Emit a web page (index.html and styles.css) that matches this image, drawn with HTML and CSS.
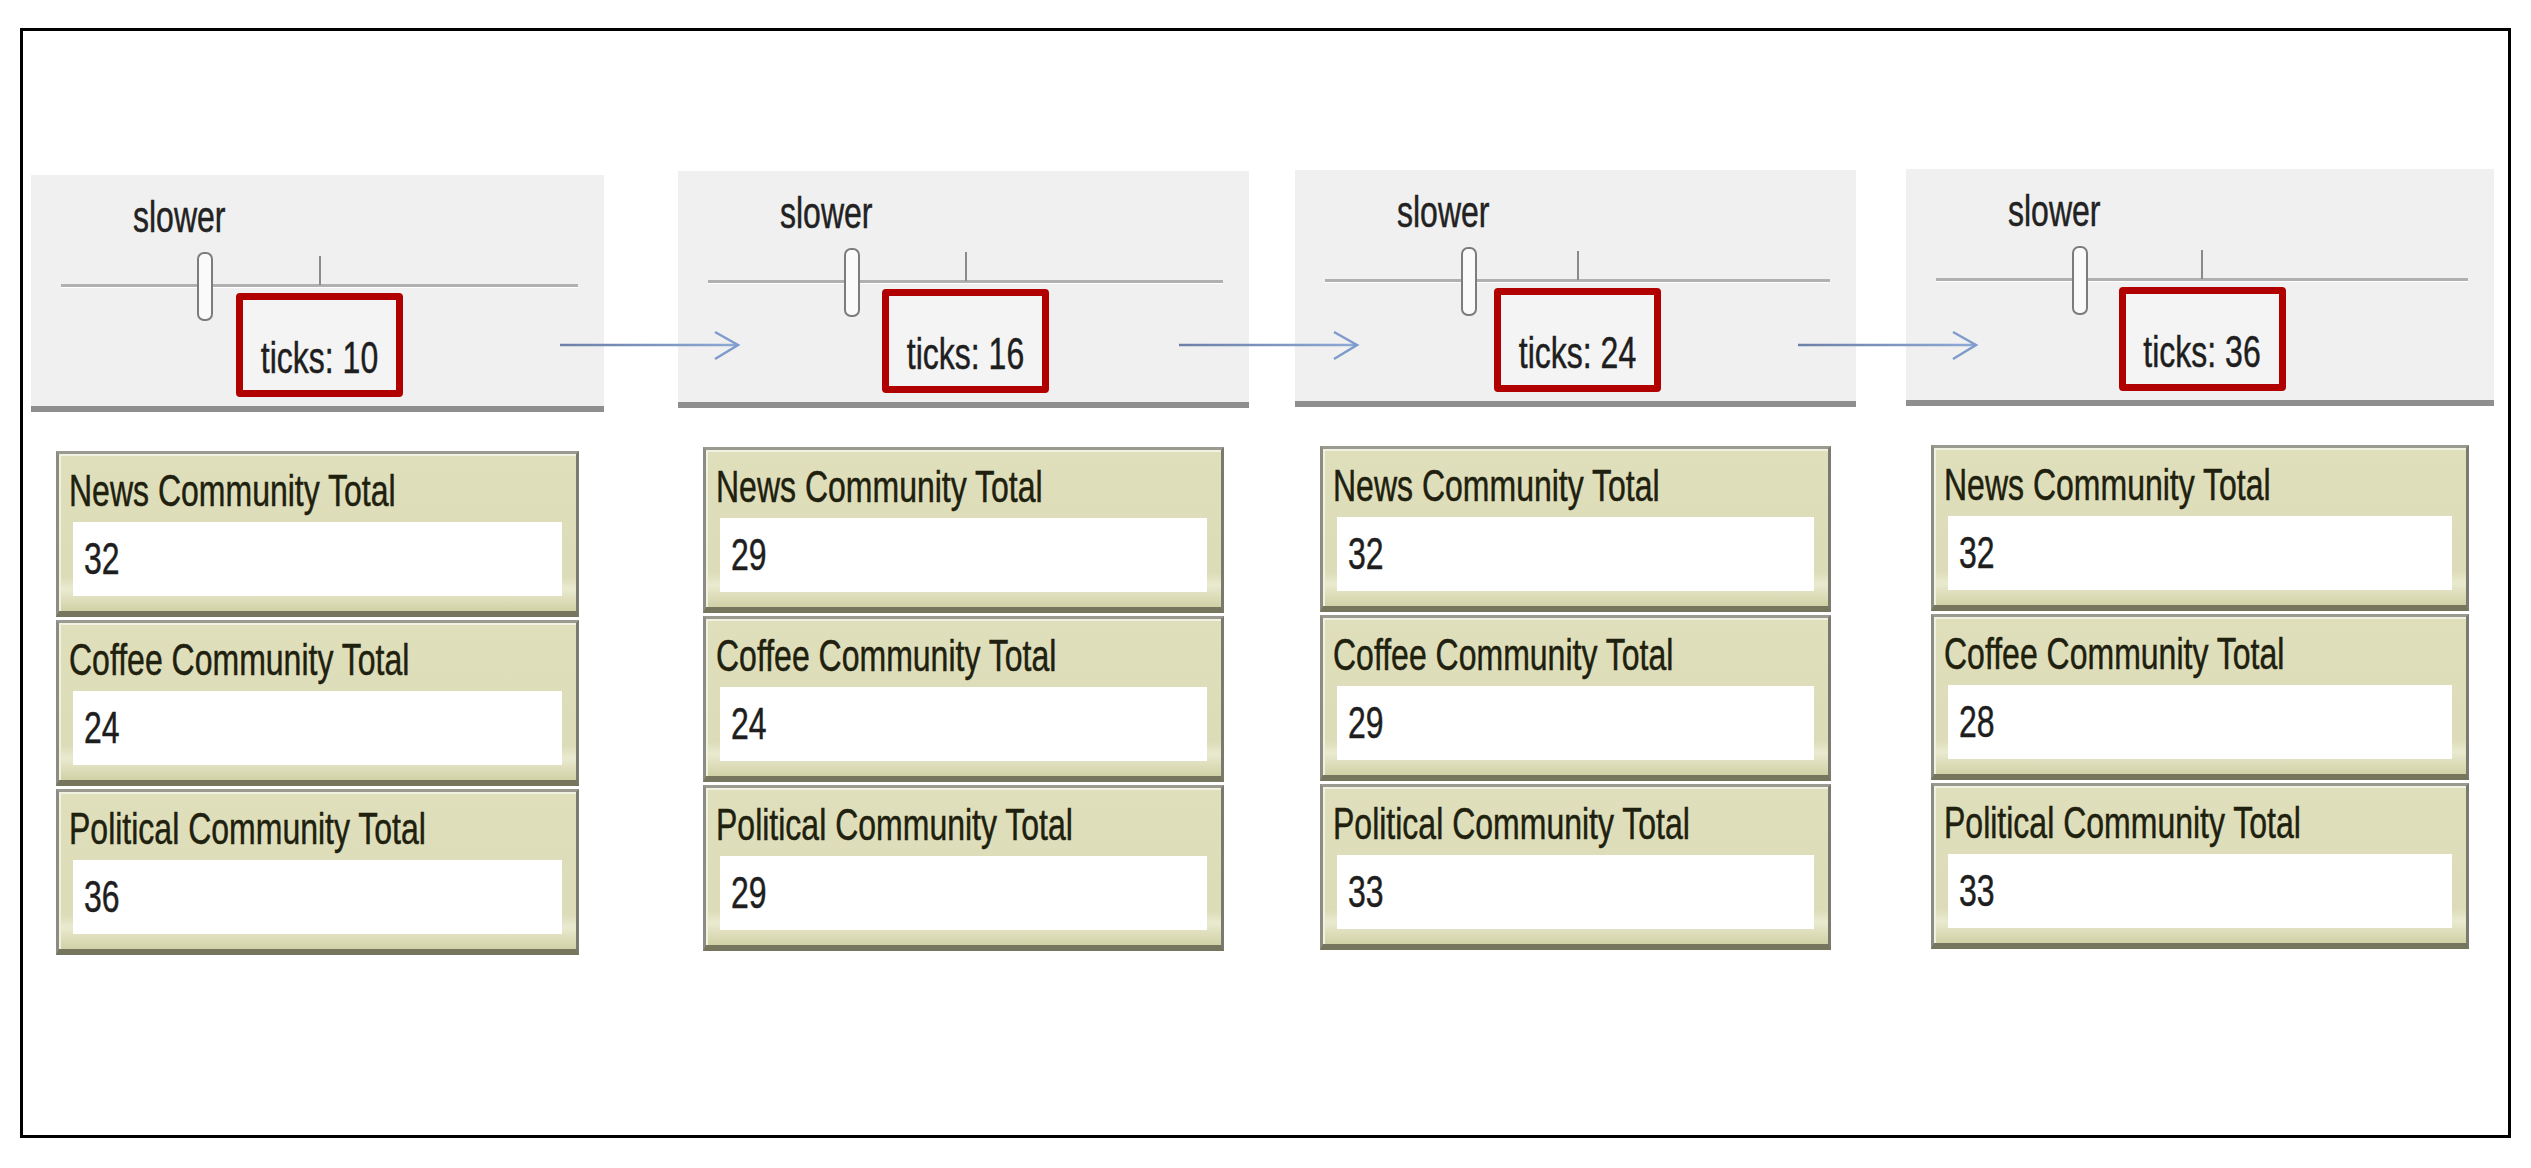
FILE: index.html
```html
<!DOCTYPE html>
<html lang="en">
<head>
<meta charset="utf-8">
<title>Speed slider and community totals</title>
<link rel="stylesheet" href="styles.css">
</head>
<body>
<div class="frame">
  <div class="row">
    <div class="col col-1">
      <div class="speed">
        <div class="speed-label"><span class="txt">slower</span></div>
        <div class="track"><span class="tick"></span><span class="thumb"></span></div>
        <div class="readout"><div class="ticks-box"><span class="txt">ticks: 10</span></div></div>
      </div>
      <div class="monitors">
        <div class="monitor"><div class="mon-label"><span class="txt">News Community Total</span></div><div class="mon-value"><span class="txt">32</span></div></div>
        <div class="monitor"><div class="mon-label"><span class="txt">Coffee Community Total</span></div><div class="mon-value"><span class="txt">24</span></div></div>
        <div class="monitor"><div class="mon-label"><span class="txt">Political Community Total</span></div><div class="mon-value"><span class="txt">36</span></div></div>
      </div>
    </div>

    <div class="col col-2">
      <div class="speed">
        <div class="speed-label"><span class="txt">slower</span></div>
        <div class="track"><span class="tick"></span><span class="thumb"></span></div>
        <div class="readout"><div class="ticks-box"><span class="txt">ticks: 16</span></div></div>
      </div>
      <div class="monitors">
        <div class="monitor"><div class="mon-label"><span class="txt">News Community Total</span></div><div class="mon-value"><span class="txt">29</span></div></div>
        <div class="monitor"><div class="mon-label"><span class="txt">Coffee Community Total</span></div><div class="mon-value"><span class="txt">24</span></div></div>
        <div class="monitor"><div class="mon-label"><span class="txt">Political Community Total</span></div><div class="mon-value"><span class="txt">29</span></div></div>
      </div>
    </div>

    <div class="col col-3">
      <div class="speed">
        <div class="speed-label"><span class="txt">slower</span></div>
        <div class="track"><span class="tick"></span><span class="thumb"></span></div>
        <div class="readout"><div class="ticks-box"><span class="txt">ticks: 24</span></div></div>
      </div>
      <div class="monitors">
        <div class="monitor"><div class="mon-label"><span class="txt">News Community Total</span></div><div class="mon-value"><span class="txt">32</span></div></div>
        <div class="monitor"><div class="mon-label"><span class="txt">Coffee Community Total</span></div><div class="mon-value"><span class="txt">29</span></div></div>
        <div class="monitor"><div class="mon-label"><span class="txt">Political Community Total</span></div><div class="mon-value"><span class="txt">33</span></div></div>
      </div>
    </div>

    <div class="col col-4">
      <div class="speed">
        <div class="speed-label"><span class="txt">slower</span></div>
        <div class="track"><span class="tick"></span><span class="thumb"></span></div>
        <div class="readout"><div class="ticks-box"><span class="txt">ticks: 36</span></div></div>
      </div>
      <div class="monitors">
        <div class="monitor"><div class="mon-label"><span class="txt">News Community Total</span></div><div class="mon-value"><span class="txt">32</span></div></div>
        <div class="monitor"><div class="mon-label"><span class="txt">Coffee Community Total</span></div><div class="mon-value"><span class="txt">28</span></div></div>
        <div class="monitor"><div class="mon-label"><span class="txt">Political Community Total</span></div><div class="mon-value"><span class="txt">33</span></div></div>
      </div>
    </div>

    <svg class="arrow arrow-1" width="184" height="34" viewBox="0 0 184 34">
      <defs>
        <linearGradient id="ag" gradientUnits="userSpaceOnUse" x1="0" y1="0" x2="184" y2="0">
          <stop offset="0" stop-color="#6c7fa6"/>
          <stop offset="1" stop-color="#8eaad8"/>
        </linearGradient>
      </defs>
      <line x1="2" y1="17" x2="180" y2="17" stroke="url(#ag)" stroke-width="2.5"/>
      <path d="M157 4 L180 17 L157 31" fill="none" stroke="#7f9bcc" stroke-width="2.5"/>
    </svg>
    <svg class="arrow arrow-2" width="184" height="34" viewBox="0 0 184 34">
      <line x1="2" y1="17" x2="180" y2="17" stroke="url(#ag)" stroke-width="2.5"/>
      <path d="M157 4 L180 17 L157 31" fill="none" stroke="#7f9bcc" stroke-width="2.5"/>
    </svg>
    <svg class="arrow arrow-3" width="184" height="34" viewBox="0 0 184 34">
      <line x1="2" y1="17" x2="180" y2="17" stroke="url(#ag)" stroke-width="2.5"/>
      <path d="M157 4 L180 17 L157 31" fill="none" stroke="#7f9bcc" stroke-width="2.5"/>
    </svg>
  </div>
</div>
</body>
</html>
```

FILE: styles.css
```css
* { box-sizing: border-box; }

html, body {
  margin: 0;
  padding: 0;
  background: #ffffff;
}

body {
  font-family: "Liberation Sans", Arial, sans-serif;
  font-size: 32px;
  color: #1c1c14;
}

.frame {
  width: 2491px;
  height: 1110px;
  margin: 28px 0 0 20px;
  border: 3px solid #000000;
  background: #ffffff;
}

.row {
  position: relative;
  display: flex;
  align-items: flex-start;
  padding-top: 140px;
}

.col { flex: none; }
.col-1 { width: 573px; margin-left: 8px; margin-top: 4px; }
.col-2 { width: 571px; margin-left: 74px; }
.col-3 { width: 561px; margin-left: 46px; margin-top: -1px; }
.col-4 { width: 588px; margin-left: 50px; margin-top: -2px; }

/* text rendering: tall, narrow UI font */
.txt {
  display: inline-block;
  line-height: 40px;
  white-space: nowrap;
  transform: scaleY(1.36);
  transform-origin: 0 31px;
  -webkit-text-stroke: 0.35px currentColor;
}

/* ---------- speed slider panel ---------- */
.speed {
  height: 237px;
  padding-top: 26px;
  background: #f0f0f0;
  border-bottom: 6px solid #8e8e8e;
}

.speed-label {
  height: 40px;
  line-height: 40px;
  margin-left: 102px;
  color: #222222;
}

.track {
  position: relative;
  height: 3px;
  margin: 43px 26px 0 30px;
  background: #b0b0b0;
  box-shadow: 0 1px 0 #ffffff;
}

.tick {
  position: absolute;
  left: 50%;
  bottom: 2px;
  width: 2px;
  height: 29px;
  margin-left: -1px;
  background: #8a8a8a;
}

.thumb {
  position: absolute;
  left: 136px;
  top: -32px;
  width: 16px;
  height: 69px;
  border: 2px solid #7c7c7c;
  border-radius: 7px;
  background: #fafafa;
}

.readout {
  margin: 6px 26px 0 30px;
  display: flex;
  justify-content: center;
}

.ticks-box {
  width: 167px;
  height: 104px;
  padding-top: 42px;
  border: 7px solid #b10000;
  border-radius: 4px;
  background: #f4f4f4;
  text-align: center;
  color: #1e1e1e;
}

/* ---------- monitors ---------- */
.monitors {
  margin: 39px 25px 0 25px;
  display: flex;
  flex-direction: column;
  gap: 3px;
}

.monitor {
  height: 166px;
  padding: 21px 14px 0 14px;
  border-style: solid;
  border-width: 3px 3px 6px 3px;
  border-color: #9a9a90 #7a7a6e #76765e #8c8c82;
  background: linear-gradient(to bottom, #dfdfbc 0%, #dcdcb8 78%, #eaead0 86%, #d1d1a6 100%);
  box-shadow: inset 2px 2px 0 #f1f1e2;
}

.mon-label {
  height: 40px;
  line-height: 40px;
  margin-left: -4px;
  color: #20200e;
}

.mon-value {
  height: 74px;
  margin-top: 7px;
  padding: 21px 0 0 11px;
  background: #ffffff;
  line-height: 40px;
  color: #1e1e1e;
}

/* ---------- arrows (overlay between panels) ---------- */
.arrow {
  position: absolute;
  top: 297px;
  display: block;
}
.arrow-1 { left: 535px; }
.arrow-2 { left: 1154px; }
.arrow-3 { left: 1773px; }
```
